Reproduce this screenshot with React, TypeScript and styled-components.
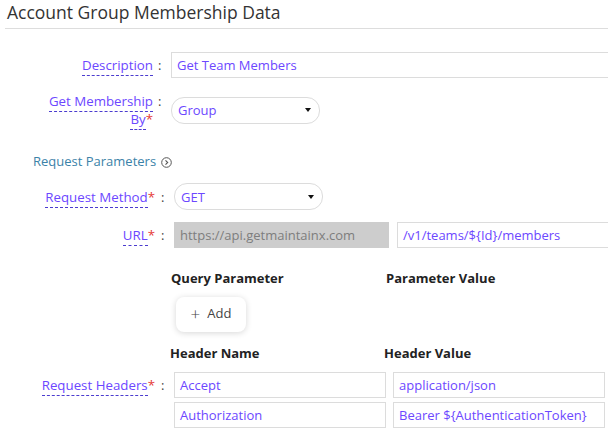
import React from "react";
import styled, { createGlobalStyle } from "styled-components";

const Global = createGlobalStyle`
  html, body { margin: 0; padding: 0; background: #fff; overflow: hidden; }
  body { font-family: "Open Sans", "Liberation Sans", sans-serif; }
  * { box-sizing: border-box; }
`;

const PURPLE = "#6c47ff";

const Page = styled.div`
  width: 608px;
  height: 431px;
  padding-left: 5px;
  overflow: hidden;
`;

const Title = styled.h1`
  margin: 0;
  height: 29px;
  padding: 0 0 0 2px;
  font-size: 17.5px;
  font-weight: 400;
  line-height: 25px;
  color: #333;
  border-bottom: 1px solid #ddd;
  white-space: nowrap;
`;

const Row = styled.div<{ $mt: number; $req?: boolean; $top?: boolean }>`
  display: grid;
  grid-template-columns: ${(p) => (p.$req ? "169px" : "166px")} auto;
  align-items: ${(p) => (p.$top ? "start" : "center")};
  margin-top: ${(p) => p.$mt}px;
`;

const LabelCell = styled.div<{ $pt?: number }>`
  display: flex;
  justify-content: flex-end;
  align-items: flex-start;
  padding-top: ${(p) => p.$pt ?? 0}px;
`;

const LabelText = styled.span`
  max-width: 118px;
  text-align: right;
  font-size: 13.3px;
  line-height: 18px;
  color: ${PURPLE};
`;

const Dashed = styled.span`
  border-bottom: 1px dashed #4b3ccf;
  padding-bottom: 1px;
`;

const Star = styled.span`
  color: #e53935;
`;

const Colon = styled.span<{ $req?: boolean }>`
  flex: none;
  width: ${(p) => (p.$req ? 19 : 18)}px;
  padding-left: ${(p) => (p.$req ? 6 : 5)}px;
  font-size: 13px;
  line-height: 18px;
  color: #444;
`;

const TextBox = styled.div<{ $w: number; $grey?: boolean }>`
  width: ${(p) => p.$w}px;
  height: 26px;
  padding-left: 5px;
  display: flex;
  align-items: center;
  font-size: 13px;
  white-space: nowrap;
  border: 1px solid ${(p) => (p.$grey ? "#cdcdcd" : "#dcdcdc")};
  background: ${(p) => (p.$grey ? "#cdcdcd" : "#fff")};
  color: ${(p) => (p.$grey ? "#7d7d7d" : PURPLE)};
`;

const Select = styled.div`
  width: 149px;
  height: 27px;
  padding: 0 8px 0 6px;
  display: flex;
  align-items: center;
  justify-content: space-between;
  border: 1px solid #dcdcdc;
  border-radius: 13px;
  font-size: 13px;
  color: ${PURPLE};
`;

const Caret = styled.span`
  width: 0;
  height: 0;
  border-left: 3.5px solid transparent;
  border-right: 3.5px solid transparent;
  border-top: 4px solid #111;
`;

const Pair = styled.div<{ $gap: number }>`
  display: flex;
  gap: ${(p) => p.$gap}px;
`;

const Section = styled.div`
  margin-top: 24px;
  padding-left: 28px;
  display: flex;
  align-items: center;
  gap: 5px;
  font-size: 13px;
  line-height: 18px;
  color: #3b82a8;
`;

const Headings = styled.div<{ $mt: number; $left: number; $col: number }>`
  display: grid;
  grid-template-columns: ${(p) => p.$col}px auto;
  margin-top: ${(p) => p.$mt}px;
  padding-left: ${(p) => p.$left}px;
  font-size: 13px;
  line-height: 18px;
  font-weight: 700;
  color: #222;
`;

const AddButton = styled.button`
  margin: 10px 0 0 171px;
  width: 70px;
  height: 35px;
  border: none;
  border-radius: 8px;
  background: #fff;
  box-shadow: 0 1px 6px rgba(0, 0, 0, 0.16);
  display: flex;
  align-items: center;
  justify-content: center;
  gap: 7px;
  font-family: "Open Sans", "Liberation Sans", sans-serif;
  font-size: 13px;
  line-height: 18px;
  color: #444;
  padding: 0 0 3px 0;
`;

const Plus = styled.span`
  font-size: 17px;
  font-weight: 300;
  line-height: 1;
`;

const Stack = styled.div`
  display: flex;
  flex-direction: column;
  gap: 4px;
`;

const Label: React.FC<{ text: string; req?: boolean; pt?: number }> = ({ text, req, pt }) => (
  <LabelCell $pt={pt}>
    <LabelText>
      <Dashed>{text}</Dashed>
      {req && <Star>*</Star>}
    </LabelText>
    <Colon $req={req}>:</Colon>
  </LabelCell>
);

const ChevronCircle = () => (
  <svg width="11" height="11" viewBox="0 0 11 11" style={{ marginTop: 2 }}>
    <circle cx="5.5" cy="5.5" r="4.8" fill="none" stroke="#555" strokeWidth="1" />
    <path d="M4.5 3.3 L6.7 5.5 L4.5 7.7" fill="none" stroke="#555" strokeWidth="1.1" />
  </svg>
);

export default function App() {
  return (
    <>
      <Global />
      <Page>
        <Title>Account Group Membership Data</Title>

        <Row $mt={23}>
          <Label text="Description" />
          <TextBox $w={460}>Get Team Members</TextBox>
        </Row>

        <Row $mt={14}>
          <LabelCell>
            <LabelText>
              <Dashed>Get Membership By</Dashed>
              <Star>*</Star>
            </LabelText>
            <Colon>:</Colon>
          </LabelCell>
          <Select>
            Group
            <Caret />
          </Select>
        </Row>

        <Section>
          Request Parameters
          <ChevronCircle />
        </Section>

        <Row $mt={13} $req>
          <Label text="Request Method" req />
          <Select>
            GET
            <Caret />
          </Select>
        </Row>

        <Row $mt={12} $req>
          <Label text="URL" req />
          <Pair $gap={8}>
            <TextBox $w={215} $grey>https://api.getmaintainx.com</TextBox>
            <TextBox $w={240}>/v1/teams/${"{Id}"}/members</TextBox>
          </Pair>
        </Row>

        <Headings $mt={21} $left={166} $col={215}>
          <span>Query Parameter</span>
          <span>Parameter Value</span>
        </Headings>

        <AddButton>
          <Plus>+</Plus>
          Add
        </AddButton>

        <Headings $mt={12} $left={165} $col={214}>
          <span>Header Name</span>
          <span>Header Value</span>
        </Headings>

        <Row $mt={10} $req $top>
          <Label text="Request Headers" req pt={4} />
          <Stack>
            <Pair $gap={7}>
              <TextBox $w={212}>Accept</TextBox>
              <TextBox $w={212}>application/json</TextBox>
            </Pair>
            <Pair $gap={7}>
              <TextBox $w={212}>Authorization</TextBox>
              <TextBox $w={212}>Bearer ${"{AuthenticationToken}"}</TextBox>
            </Pair>
          </Stack>
        </Row>
      </Page>
    </>
  );
}
